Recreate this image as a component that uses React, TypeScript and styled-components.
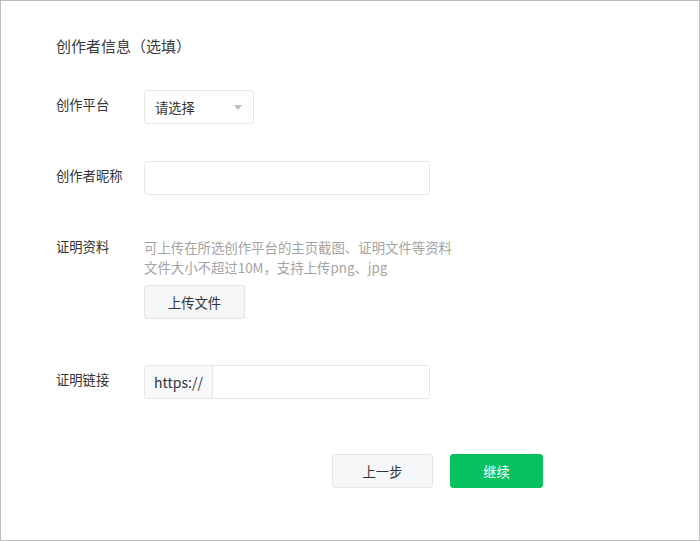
import styled, { createGlobalStyle } from "styled-components";

const GlobalStyle = createGlobalStyle`
  html, body {
    margin: 0;
    padding: 0;
    background: #fff;
  }
  * {
    box-sizing: border-box;
  }
`;

function App() {
  return (
    <>
      <GlobalStyle />
      <Page>
        <Title>创作者信息（选填）</Title>

        <Row $top={34}>
          <Label>创作平台</Label>
          <Select>
            <span>请选择</span>
            <Arrow />
          </Select>
        </Row>

        <Row $top={37}>
          <Label>创作者昵称</Label>
          <Input />
        </Row>

        <Row $top={37}>
          <Label>证明资料</Label>
          <Upload>
            <Hint>
              可上传在所选创作平台的主页截图、证明文件等资料
              <br />
              文件大小不超过10M，支持上传png、jpg
            </Hint>
            <Button>上传文件</Button>
          </Upload>
        </Row>

        <Row $top={46}>
          <Label>证明链接</Label>
          <InputGroup>
            <Prefix>https://</Prefix>
            <GroupField />
          </InputGroup>
        </Row>

        <Footer>
          <Button $width={101}>上一步</Button>
          <Button $width={93} $primary>
            继续
          </Button>
        </Footer>
      </Page>
    </>
  );
}

export default App;

const Page = styled.div`
  width: 700px;
  height: 541px;
  border: 1px solid #bdbdbd;
  padding: 35px 0 0 55px;
  font-family: "Noto Sans CJK SC", "Microsoft YaHei", sans-serif;
  color: #333;
`;

const Title = styled.div`
  font-size: 15px;
  line-height: 20px;
  color: #3a3a3a;
`;

const Row = styled.div<{ $top: number }>`
  display: flex;
  align-items: flex-start;
  margin-top: ${(p) => p.$top}px;
`;

const Label = styled.div`
  width: 88px;
  flex-shrink: 0;
  padding-top: 5px;
  font-size: 13.3px;
  line-height: 20px;
  color: #333;
`;

const Select = styled.div`
  width: 110px;
  height: 34px;
  border: 1px solid #e7e7e7;
  border-radius: 3px;
  display: flex;
  align-items: center;
  justify-content: space-between;
  padding: 0 11px 0 10px;
  font-size: 13.3px;
  color: #333;
`;

const Arrow = styled.span`
  width: 0;
  height: 0;
  border-left: 4px solid transparent;
  border-right: 4px solid transparent;
  border-top: 5px solid #bbb;
  margin-top: 1px;
`;

const Input = styled.input`
  width: 286px;
  height: 34px;
  border: 1px solid #e7e7e7;
  border-radius: 3px;
  outline: none;
  padding: 0 10px;
  font: inherit;
  font-size: 13px;
`;

const Upload = styled.div`
  display: flex;
  flex-direction: column;
  align-items: flex-start;
`;

const Hint = styled.div`
  padding-top: 5px;
  font-size: 13.4px;
  line-height: 20px;
  color: #a3a3a3;
`;

const Button = styled.button<{ $width?: number; $primary?: boolean }>`
  width: ${(p) => p.$width ?? 101}px;
  height: 34px;
  margin-top: 8px;
  border-radius: 3px;
  border: 1px solid ${(p) => (p.$primary ? "#07c160" : "#e3e4e6")};
  background: ${(p) => (p.$primary ? "#07c160" : "#f5f6f8")};
  color: ${(p) => (p.$primary ? "#fff" : "#333")};
  font-family: inherit;
  font-size: 13.3px;
  cursor: pointer;
  padding: 0;
`;

const InputGroup = styled.div`
  width: 286px;
  height: 34px;
  border: 1px solid #e7e7e7;
  border-radius: 3px;
  display: flex;
  overflow: hidden;
`;

const Prefix = styled.div`
  width: 68px;
  display: flex;
  align-items: center;
  justify-content: center;
  background: #f7f8fa;
  border-right: 1px solid #e7e7e7;
  font-size: 14px;
  color: #333;
`;

const GroupField = styled.input`
  flex: 1;
  border: none;
  outline: none;
  padding: 0 10px;
  font: inherit;
`;

const Footer = styled.div`
  display: flex;
  gap: 17px;
  margin-top: 47px;
  padding-left: 276px;
`;
